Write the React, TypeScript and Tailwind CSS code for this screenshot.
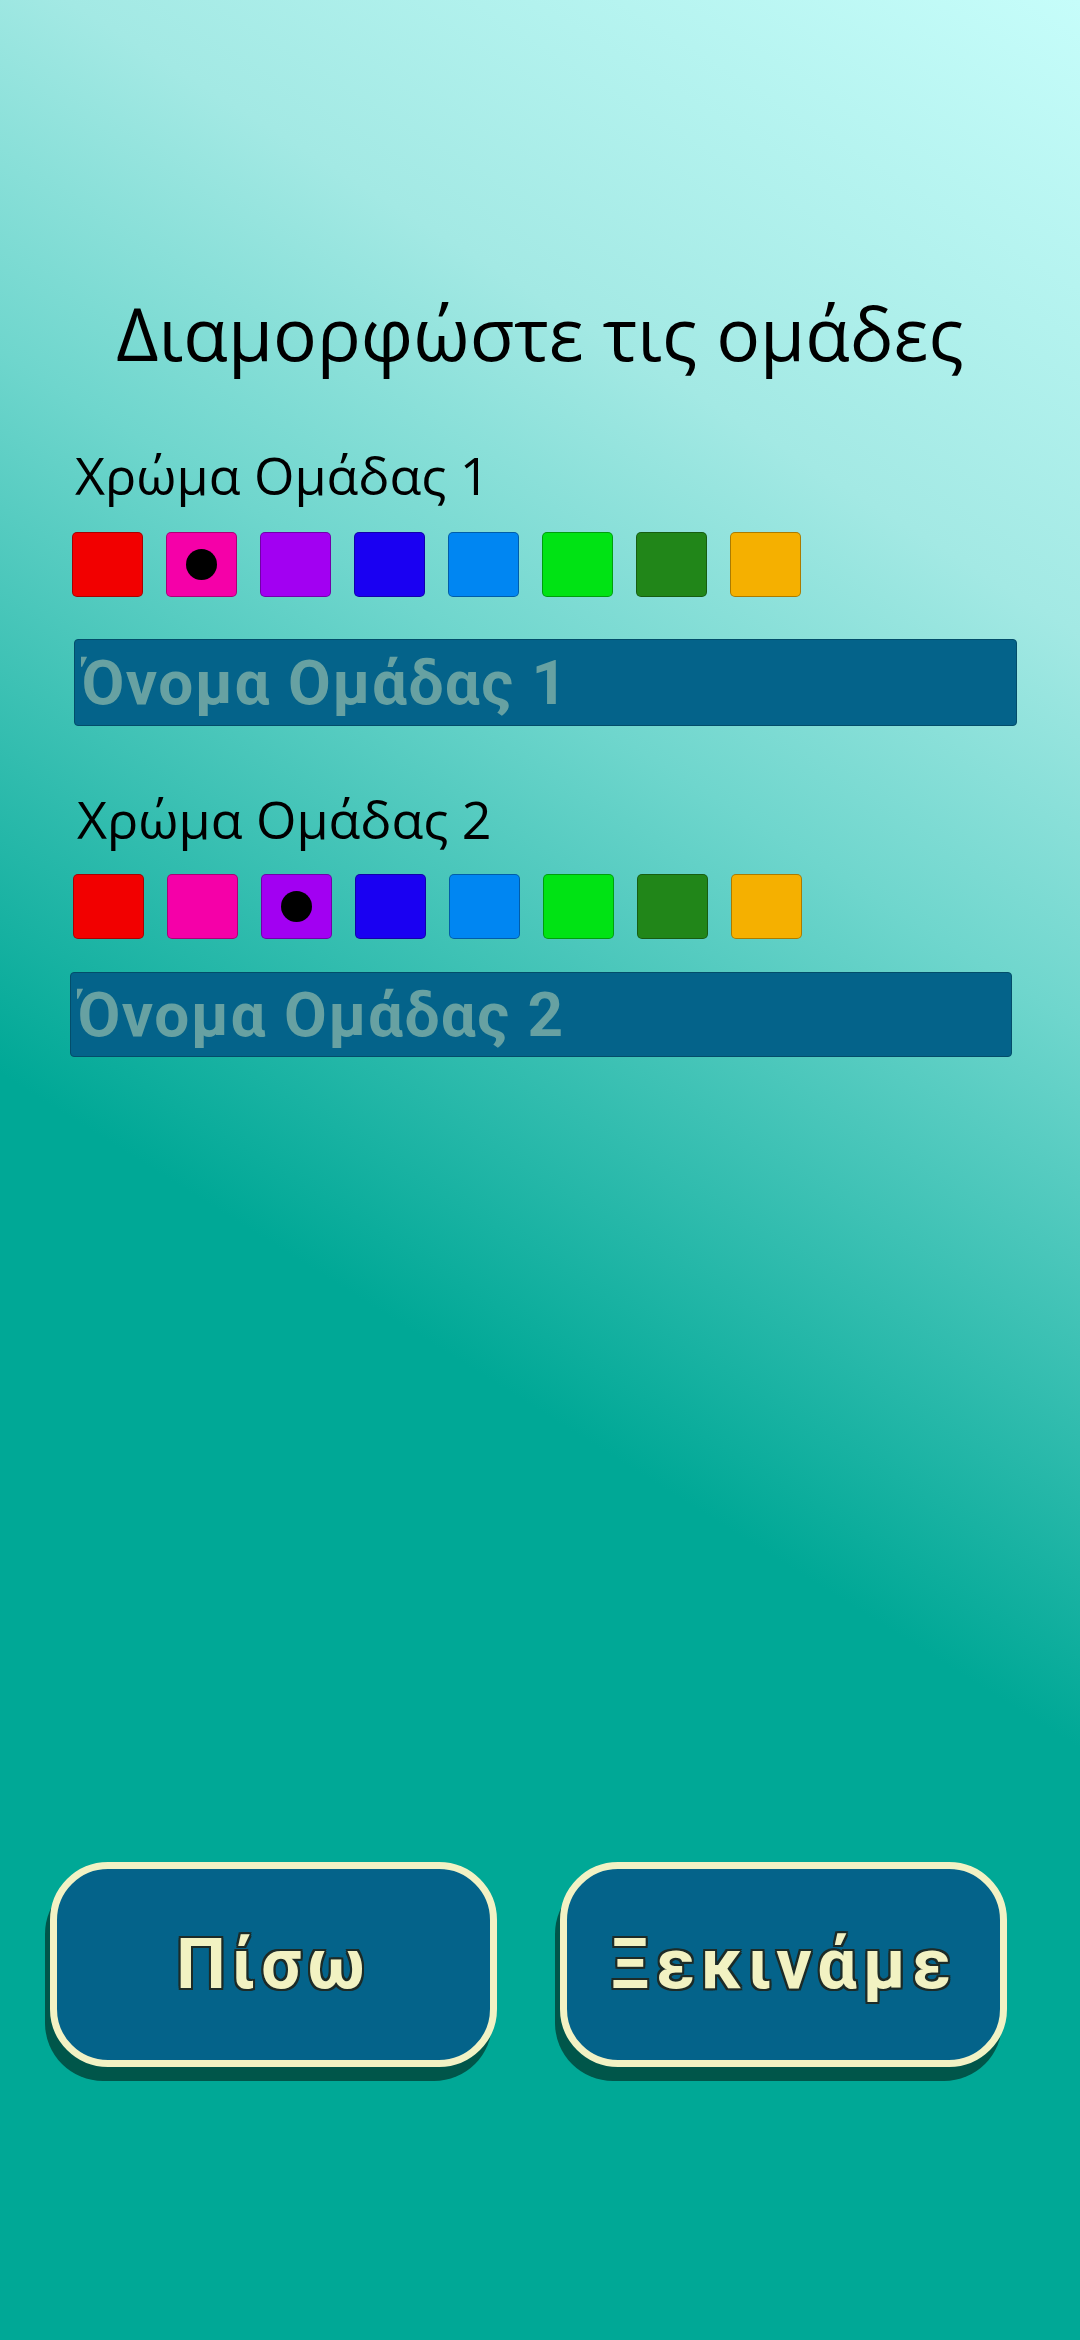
import { useState } from "react";

const colors = ["#f20000", "#f500a8", "#a200f2", "#1a00f2", "#0086f2", "#00e314", "#218619", "#f5b000"];

const outline =
  "[text-shadow:2px_0_0_#1d2b27,-2px_0_0_#1d2b27,0_2px_0_#1d2b27,0_-2px_0_#1d2b27,2px_2px_0_#1d2b27,-2px_-2px_0_#1d2b27,2px_-2px_0_#1d2b27,-2px_2px_0_#1d2b27]";

function Swatches({ selected, onPick }: { selected: number; onPick: (i: number) => void }) {
  return (
    <div className="flex gap-[23px]">
      {colors.map((c, i) => (
        <button
          key={c}
          onClick={() => onPick(i)}
          className="w-[71px] h-[65px] rounded-[5px] border border-black/30 flex items-center justify-center"
          style={{ backgroundColor: c }}
        >
          {selected === i && <span className="w-[31px] h-[31px] rounded-full bg-black" />}
        </button>
      ))}
    </div>
  );
}

function GameButton({ label }: { label: string }) {
  return (
    <button
      className={`w-[447px] h-[205px] rounded-[58px] border-[7px] border-[#f2f2c4] bg-[#04638a] shadow-[-5px_14px_0_#00564a] flex items-center justify-center font-['Roboto',sans-serif] text-[70px] font-bold tracking-[0.085em] text-[#f2f2c2] ${outline}`}
    >
      {label}
    </button>
  );
}

export default function App() {
  const [team1, setTeam1] = useState(1);
  const [team2, setTeam2] = useState(2);

  return (
    <div className="h-[2340px] w-full flex flex-col overflow-hidden font-['Open_Sans',sans-serif] text-black bg-[linear-gradient(32deg,#00a896_42%,#6fd6cd_66%,#a3e9e4_79%,#c6fdfa_100%)]">
      <h1 className="mt-[296px] text-[73px] leading-none text-center">Διαμορφώστε τις ομάδες</h1>

      {/* Team 1 */}
      <div className="mt-[80px] pl-[75px] text-[52px] leading-none">Χρώμα Ομάδας 1</div>
      <div className="mt-[31px] pl-[72px]">
        <Swatches selected={team1} onPick={setTeam1} />
      </div>
      <input
        placeholder="Όνομα Ομάδας 1"
        className="mt-[42px] ml-[74px] w-[943px] h-[87px] rounded-[4px] border border-[#034d6a] bg-[#04638a] pl-[6px] font-['Roboto',sans-serif] text-[62px] font-bold tracking-[1.5px] text-[#67a1a2] placeholder:text-[#67a1a2] outline-none"
      />

      {/* Team 2 */}
      <div className="mt-[67px] pl-[77px] text-[52px] leading-none">Χρώμα Ομάδας 2</div>
      <div className="mt-[29px] pl-[73px]">
        <Swatches selected={team2} onPick={setTeam2} />
      </div>
      <input
        placeholder="Όνομα Ομάδας 2"
        className="mt-[33px] ml-[70px] w-[942px] h-[85px] rounded-[4px] border border-[#034d6a] bg-[#04638a] pl-[6px] font-['Roboto',sans-serif] text-[62px] font-bold tracking-[1.5px] text-[#67a1a2] placeholder:text-[#67a1a2] outline-none"
      />

      <div className="mt-[805px] pl-[50px] flex gap-[63px]">
        <GameButton label="Πίσω" />
        <GameButton label="Ξεκινάμε" />
      </div>
    </div>
  );
}
